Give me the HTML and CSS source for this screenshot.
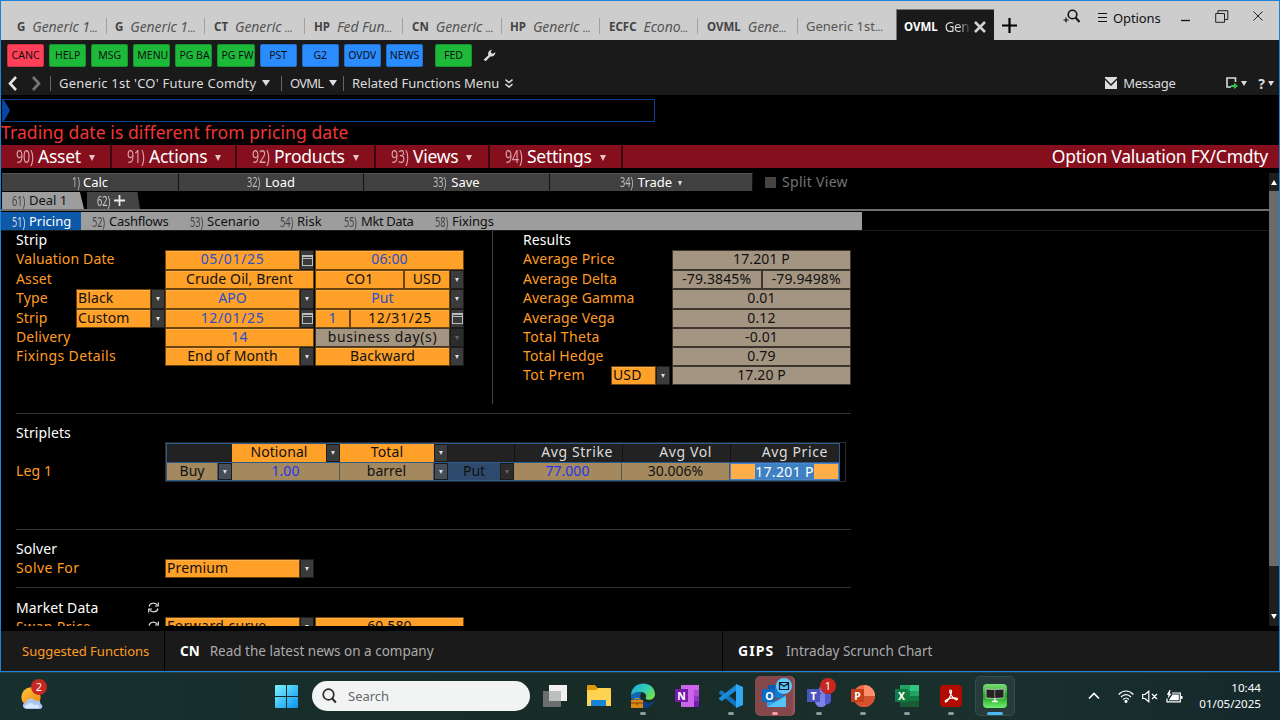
FILE: index.html
```
<!DOCTYPE html>
<html lang="en">
<head>
<meta charset="utf-8">
<title>OVML - Option Valuation</title>
<link rel="stylesheet" href="styles.css">
</head>
<body>
<main class="window">
  <header class="tabs">
    <div class="tab first"><b>G</b><i>Generic 1<small>...</small></i></div>
    <div class="tab"><b>G</b><i>Generic 1<small>...</small></i></div>
    <div class="tab nudge"><b>CT</b><i>Generic <small>...</small></i></div>
    <div class="tab nudge"><b>HP</b><i>Fed Fun<small>...</small></i></div>
    <div class="tab nudge"><b>CN</b><i>Generic <small>...</small></i></div>
    <div class="tab"><b>HP</b><i>Generic <small>...</small></i></div>
    <div class="tab nudge"><b>ECFC</b><i>Econo<small>...</small></i></div>
    <div class="tab nudge"><b>OVML</b><i>Gene<small>...</small></i></div>
    <div class="tab last"><span>Generic 1st<small>...</small></span></div>
    <div class="tab active"><b>OVML</b><span class="fade">Gene</span>
      <svg width="12" height="12" viewBox="0 0 12 12"><path d="M1 1L11 11M11 1L1 11" stroke="#d4d4d4" stroke-width="2.5"/></svg></div>
    <svg class="plus" width="15" height="15" viewBox="0 0 15 15"><path d="M7.5 0V15M0 7.500H15" stroke="#000" stroke-width="2.200"/></svg>
    <div class="win-tools">
      <svg class="find" width="18" height="15" viewBox="0 0 18 15" fill="none" stroke="#111"><circle cx="9.500" cy="5.500" r="4.300" stroke-width="1.600"/><path d="M12.500 8.500L16.500 13" stroke-width="2"/><path d="M3 8.500V13.500M.5 11H5.500" stroke-width="1.200"/></svg>
      <svg class="burger" width="9" height="9" viewBox="0 0 9 9"><path d="M0 .5H9M0 4.500H9M0 8.500H9" stroke="#111"/></svg>
      <span class="options">Options</span>
      <svg class="min" width="9" height="3" viewBox="0 0 9 3"><path d="M0 1.500H9" stroke="#111" stroke-width="1.300"/></svg>
      <svg class="max" width="14" height="13" viewBox="0 0 14 13" fill="none" stroke="#222"><path d="M.7 3.500H9.500V12.300H.7ZM3 3.500V.7H12.800V9.500H9.500"/></svg>
      <svg class="close" width="10" height="10" viewBox="0 0 10 10"><path d="M.5 .5L9.500 9.500M9.500 .5L.5 9.500" stroke="#222"/></svg>
    </div>
  </header>

  <div class="keys">
    <span class="key red">CANC</span><span class="key green">HELP</span><span class="key green">MSG</span><span class="key green">MENU</span><span class="key green">PG BA</span><span class="key green">PG FW</span><span class="key blue">PST</span><span class="key blue">G2</span><span class="key blue">OVDV</span><span class="key blue">NEWS</span><span class="key green fed">FED</span>
    <svg width="13" height="13" viewBox="0 0 13 13"><path d="M.6 10.800L5.300 6.200C4.600 3.300 6.300 .9 9.200 .8L7.600 2.700L8.600 4.600L10.600 4.500L12.400 3.100C12.500 5.900 10.200 8 7.300 7.500L2.700 12.300Z" fill="#dcdcdc"/></svg>
  </div>

  <nav class="crumbs">
    <svg class="back" width="9" height="15" viewBox="0 0 9 15"><path d="M8 1L2 7.500L8 14" fill="none" stroke="#e4e4e4" stroke-width="2.600"/></svg>
    <svg class="fwd" width="9" height="15" viewBox="0 0 9 15"><path d="M1 1L7 7.500L1 14" fill="none" stroke="#777" stroke-width="2.600"/></svg>
    <div class="crumb c1"><span>Generic 1st 'CO' Future Comdty</span><i class="tri"></i></div>
    <div class="crumb c2"><span>OVML</span><i class="tri"></i></div>
    <div class="crumb c3"><span>Related Functions Menu</span>
      <svg width="8" height="9" viewBox="0 0 8 9"><path d="M.5 .7L4 3.500L7.500 .7M.5 5.200L4 8L7.500 5.200" fill="none" stroke="#ddd" stroke-width="1.500"/></svg></div>
    <div class="crumb-right">
      <svg width="12" height="12" viewBox="0 0 12 12"><path d="M0 0H12V12H0Z" fill="#ddd"/><path d="M0 2L6 8L12 2" fill="none" stroke="#1a1a1a" stroke-width="1.400"/></svg>
      <span class="message">Message</span>
      <svg class="export" width="12" height="12" viewBox="0 0 12 12"><path d="M5 10H1V1H9.500V5" fill="none" stroke="#ddd" stroke-width="1.600"/><path d="M5 8H8V5.800L12 9L8 12V10H5Z" fill="#27c840"/></svg>
      <i class="tri small"></i><b class="help">?</b><i class="tri small"></i>
    </div>
  </nav>

  <div class="command"><svg width="8" height="21" viewBox="0 0 8 22" preserveAspectRatio="none"><path d="M0 0H1L7 11L1 22H0Z" fill="#0747a1"/></svg></div>
  <div class="alert">Trading date is different from pricing date</div>

  <div class="menu">
    <div class="m1"><em>90)</em><span>Asset</span><i class="tri"></i></div>
    <div class="m2"><em>91)</em><span>Actions</span><i class="tri"></i></div>
    <div class="m3"><em>92)</em><span>Products</span><i class="tri"></i></div>
    <div class="m4"><em>93)</em><span>Views</span><i class="tri"></i></div>
    <div class="m5"><em>94)</em><span>Settings</span><i class="tri"></i></div>
    <strong>Option Valuation FX/Cmdty</strong>
  </div>

  <div class="work">
    <div class="page">
      <div class="actions">
        <div><em>1)</em><span>Calc</span></div>
        <div><em>32)</em><span>Load</span></div>
        <div><em>33)</em><span>Save</span></div>
        <div><em>34)</em><span>Trade</span><i class="tri"></i></div>
        <label><i class="check"></i>Split View</label>
      </div>
      <div class="deals">
        <div class="deal"><em>61)</em><span>Deal 1</span></div>
        <div class="deal add"><em>62)</em><svg width="11" height="11" viewBox="0 0 11 11"><path d="M5.500 0V11M0 5.500H11" stroke="#e8e8e8" stroke-width="1.800"/></svg></div>
      </div>
      <div class="subtabs">
        <div class="on"><em>51)</em><span>Pricing</span></div>
        <div class="s2"><em>52)</em><span>Cashflows</span></div>
        <div class="s3"><em>53)</em><span>Scenario</span></div>
        <div class="s4"><em>54)</em><span>Risk</span></div>
        <div class="s5"><em>55)</em><span>Mkt Data</span></div>
        <div class="s6"><em>58)</em><span>Fixings</span></div>
      </div>

      <div class="body">
        <section class="upper">
          <div class="form">
            <h2>Strip</h2>
            <div class="row r20"><span class="lbl">Valuation Date</span><div class="fa"><span class="in ed wide">05/01/25</span><i class="cal"></i></div><div class="fb"><span class="in ed">06:00</span></div></div>
            <div class="row"><span class="lbl">Asset</span><div class="fa"><span class="in">Crude Oil, Brent</span></div><div class="fb"><span class="in">CO1</span><span class="in cur">USD</span><i class="dd"></i></div></div>
            <div class="row r20"><span class="lbl half">Type</span><div class="fs"><span class="in left">Black</span><i class="dd"></i></div><div class="fa"><span class="in ed">APO</span><i class="dd"></i></div><div class="fb"><span class="in ed">Put</span><i class="dd"></i></div></div>
            <div class="row"><span class="lbl half">Strip</span><div class="fs"><span class="in left">Custom</span><i class="dd"></i></div><div class="fa"><span class="in ed wide">12/01/25</span><i class="cal"></i></div><div class="fb"><span class="in ed n1">1</span><span class="in wide">12/31/25</span><i class="cal"></i></div></div>
            <div class="row"><span class="lbl">Delivery</span><div class="fa"><span class="in ed">14</span></div><div class="fb"><span class="in ro wide">business day(s)</span><i class="dd off"></i></div></div>
            <div class="row"><span class="lbl loose">Fixings Details</span><div class="fa"><span class="in">End of Month</span><i class="dd"></i></div><div class="fb"><span class="in">Backward</span><i class="dd"></i></div></div>
          </div>
          <div class="results">
            <h2>Results</h2>
            <div class="row r20"><span class="lbl">Average Price</span><div class="fr"><span class="in ro">17.201 P</span></div></div>
            <div class="row"><span class="lbl">Average Delta</span><div class="fr"><span class="in ro">-79.3845%</span><span class="in ro">-79.9498%</span></div></div>
            <div class="row r20"><span class="lbl">Average Gamma</span><div class="fr"><span class="in ro">0.01</span></div></div>
            <div class="row"><span class="lbl">Average Vega</span><div class="fr"><span class="in ro">0.12</span></div></div>
            <div class="row"><span class="lbl loose">Total Theta</span><div class="fr"><span class="in ro">-0.01</span></div></div>
            <div class="row"><span class="lbl">Total Hedge</span><div class="fr"><span class="in ro">0.79</span></div></div>
            <div class="row"><span class="lbl prem loose">Tot Prem</span><div class="fc"><span class="in left">USD</span><i class="dd"></i></div><div class="fr"><span class="in ro">17.20 P</span></div></div>
          </div>
        </section>

        <section class="striplets">
          <h2>Striplets</h2>
          <div class="leg"><span class="lbl">Leg 1</span>
            <div class="grid">
              <div class="cells head">
                <span></span><span class="o">Notional</span><i class="dd"></i><span class="o">Total</span><i class="dd"></i><span></span><span class="r">Avg Strike</span><span class="r vol-h">Avg Vol</span><span class="r price-h">Avg Price</span>
              </div>
              <div class="cells data">
                <span class="t">Buy</span><i class="dd sl"></i><span class="t ed2">1.00</span><span class="t">barrel</span><i class="dd sl"></i><span class="put">Put</span><i class="dd off"></i><span class="t ed2">77.000</span><span class="t">30.006%</span><span class="focus"><mark>17.201 P</mark></span>
              </div>
            </div>
          </div>
        </section>

        <section class="solver">
          <h2>Solver</h2>
          <div class="row"><span class="lbl loose">Solve For</span><div class="fa"><span class="in left">Premium</span><i class="dd"></i></div></div>
        </section>

        <section class="market">
          <h2><span>Market Data</span><svg width="11" height="11" viewBox="0 0 11 11" fill="none" stroke="#ddd" stroke-width="1.200"><path d="M1 4.500C2 .4 7.500 .2 9.500 3.500M10 6.500C9 10.600 3.500 10.800 1.500 7.500"/><path d="M10.300 .5V4H7M.7 10.500V7H4"/></svg></h2>
          <div class="row"><span class="lbl sw loose"><span>Swap Price</span><svg width="11" height="11" viewBox="0 0 11 11" fill="none" stroke="#ddd" stroke-width="1.200"><path d="M1 4.500C2 .4 7.500 .2 9.500 3.500M10 6.500C9 10.600 3.500 10.800 1.500 7.500"/><path d="M10.300 .5V4H7M.7 10.500V7H4"/></svg></span><div class="fa"><span class="in left fwdc">Forward curve</span><i class="dd"></i></div><div class="fb"><span class="in">60.580</span></div></div>
        </section>
      </div>
    </div>
    <aside class="scroll"><i class="up"></i><div class="thumb"></div><i class="down"></i></aside>
  </div>

  <footer class="suggest">
    <span class="sf">Suggested Functions</span>
    <div class="s-a"><b>CN</b><span>Read the latest news on a company</span></div>
    <div class="s-b"><b>GIPS</b><span>Intraday Scrunch Chart</span></div>
  </footer>
</main>

<div class="taskbar">
  <div class="weather">
    <svg width="26" height="32" viewBox="0 0 26 32"><defs><linearGradient id="sun" x2="1" y2="1"><stop stop-color="#ffc83a"/><stop offset="1" stop-color="#ef7f16"/></linearGradient></defs><circle cx="10" cy="17" r="9.700" fill="url(#sun)"/><path d="M6 29C1 29 .5 23 5 22.500C6 18 12 17 14 21C17 19.500 20 21.500 19.500 24C22.500 25 21.500 29 19 29Z" fill="#a9c6f2"/><path d="M5 28C2 27 4 24.500 6.500 25C8 22 12 22.500 13 25.500C16 23 19 26 18 28Z" fill="#dbe7fb"/></svg>
    <b class="badge">2</b>
  </div>
  <svg class="start" width="23" height="23" viewBox="0 0 23 23"><defs><linearGradient id="w" x2="1" y2="1"><stop stop-color="#7cf3ff"/><stop offset="1" stop-color="#0a92f5"/></linearGradient></defs><path d="M0 1Q0 0 1 0H11V11H0ZM12 0H22Q23 0 23 1V11H12ZM0 12H11V23H1Q0 23 0 22ZM12 12H23V22Q23 23 22 23H12Z" fill="url(#w)"/></svg>
  <div class="search"><svg width="15" height="16" viewBox="0 0 15 16" fill="none" stroke="#2a2a2a" stroke-width="1.700"><circle cx="6.500" cy="6.500" r="5.300"/><path d="M10.300 10.500L13.800 14.500" stroke-width="2"/></svg><span>Search</span></div>
  <div class="apps">
    <div class="app"><svg width="26" height="26" viewBox="0 0 26 26"><path d="M7 2H25V18H7Z" fill="#f1f1f1"/><path d="M1 8H19V24H1Z" fill="#6b6f6f"/><path d="M7 8H19V18H7Z" fill="#bdbfbf"/></svg></div>
    <div class="app"><svg width="26" height="26" viewBox="0 0 26 26"><path d="M1 3Q1 2 2 2H9L11.500 5H24V10H1Z" fill="#dd9a05"/><path d="M1 7H10L12 5H24Q25 5 25 6V23H1Z" fill="#ffd252"/><path d="M5 18Q5 17 6 17H19Q20 17 20 18V23H5Z" fill="#1683d8"/></svg></div>
    <div class="app dot"><svg width="26" height="26" viewBox="0 0 26 26"><defs><linearGradient id="eg" x2="1" y2=".7"><stop stop-color="#1aa5e8"/><stop offset=".6" stop-color="#35d0ad"/><stop offset="1" stop-color="#76e046"/></linearGradient></defs><path d="M1 13C1 8 8 6 12 9C9 12 10 17 14 19C18 21 22 20 24 18C22 23 17 25 13 25C6 25 1 20 1 13Z" fill="#1266b4"/><path d="M1 12C2-3 24-3 25 11C25 17 18 18 15.500 15.500C19 9 8 6 1 12Z" fill="url(#eg)"/><path d="M12 18C17 21 21 20 24 18C22 23 17 25 13 25Z" fill="#0b3d85"/><path d="M1 17H13V25H1Z" fill="#d98814"/><path d="M5 17V15.500H9V17" fill="none" stroke="#d98814"/><path d="M1 20H13M6 21H8" stroke="#7c430b"/></svg></div>
    <div class="app"><svg width="26" height="26" viewBox="0 0 26 26"><path d="M7 2H25V24H7Z" fill="#ca64ea"/><path d="M20 7H25V13H20Z" fill="#ae4bd5"/><path d="M20 13H25V18H20Z" fill="#9332bf"/><path d="M20 18H25V24H20Z" fill="#7719aa"/><path d="M1 6H14V19H1Z" fill="#7719aa"/></svg><b class="glyph">N</b></div>
    <div class="app dot"><svg width="26" height="26" viewBox="0 0 26 26"><path d="M1 9L3.500 7.300L19 19V25L1 10.300Z" fill="#1174c0"/><path d="M1 16L3.500 18.300L19 7V1L1 15Z" fill="#1b8bd8"/><path d="M18 1L25 4V22L18 25Z" fill="#31a8f4"/></svg></div>
    <div class="app dot hot"><svg width="26" height="26" viewBox="0 0 26 26"><path d="M7 2H22V15H7Z" fill="#1478cf"/><path d="M7 2H14V8H7Z" fill="#0b5aac"/><path d="M6 13L15 18L25 12V24H6Z" fill="#28a1e8"/><path d="M6 24L25 13V24Z" fill="#52c5f5"/><path d="M1 6H14V19H1Z" fill="#0d6cc0"/></svg><b class="glyph">O</b><svg class="mail" width="16" height="16" viewBox="0 0 16 16"><circle cx="8" cy="8" r="8" fill="#5cc8ff"/><path d="M3.500 4.500H12.500V11.500H3.500ZM3.500 5L8 8.500L12.500 5" fill="none" stroke="#101820" stroke-width="1.200"/></svg></div>
    <div class="app dot"><svg width="26" height="26" viewBox="0 0 26 26"><circle cx="17" cy="7" r="4" fill="#7b83eb"/><path d="M9 11H21V18C21 26 9 26 9 18Z" fill="#7b83eb"/><path d="M19 11H25V17C25 21 22 22 19 21Z" fill="#5059c9"/><path d="M1 6H14V19H1Z" fill="#4b53bc"/></svg><b class="glyph">T</b><b class="badge">1</b></div>
    <div class="app dot"><svg width="26" height="26" viewBox="0 0 26 26"><circle cx="14" cy="13" r="11" fill="#ed6c47"/><path d="M14 2A11 11 0 0 1 25 13H14Z" fill="#ff8f6b"/><path d="M3 13H25A11 11 0 0 1 3 13Z" fill="#d35230"/><path d="M1 6H14V19H1Z" fill="#c43e1c"/></svg><b class="glyph">P</b></div>
    <div class="app dot"><svg width="26" height="26" viewBox="0 0 26 26"><path d="M6 2H16V13H6Z" fill="#21a366"/><path d="M16 2H25V13H16Z" fill="#33c481"/><path d="M6 8H16V24H6Z" fill="#107c41"/><path d="M16 8H25V13H16Z" fill="#21a366"/><path d="M6 18H25V24H6Z" fill="#185c37"/><path d="M16 13H25V18H16Z" fill="#107c41"/><path d="M1 6H14V19H1Z" fill="#107c41"/></svg><b class="glyph">X</b></div>
    <div class="app dot"><svg width="26" height="26" viewBox="0 0 26 26"><rect x="2" y="2" width="22" height="22" rx="4" fill="#b30b00"/><path d="M12.500 7C11 7 11.800 10 13.500 12.500C15 15 18 17.500 19.200 16.600C20.500 15.300 17 14.600 13 15.200C9 16 6.500 17.800 7.300 18.700C8.500 19.700 11 16 12.500 12.500C13.700 9.500 14 7 12.500 7Z" fill="none" stroke="#fff" stroke-width="1.200"/></svg></div>
    <div class="app cur-app"><svg width="26" height="26" viewBox="0 0 26 26"><defs><linearGradient id="bb" y2="1" x2="0"><stop stop-color="#7adf78"/><stop offset=".5" stop-color="#1fa01c"/><stop offset="1" stop-color="#6ff070"/></linearGradient></defs><rect x="1" y="1" width="24" height="24" rx="4" fill="url(#bb)"/><path d="M4 6L12.500 6.500L22 6V15L12.500 15.500L4 15Z" fill="#222" stroke="#cfd8cf" stroke-width=".8"/><path d="M12.800 6.500V15" stroke="#888"/><path d="M13 15.500V18M10 18.500H16" stroke="#f4f4f4" stroke-width="1.600" fill="none"/></svg></div>
  </div>
  <div class="tray">
    <svg width="12" height="8" viewBox="0 0 12 8"><path d="M1 6.500L6 1.500L11 6.500" fill="none" stroke="#fff" stroke-width="1.600"/></svg>
    <svg class="wifi" width="16" height="13" viewBox="0 0 16 13" fill="none" stroke="#fff" stroke-width="1.200"><path d="M.7 4.500C5-.2 11-.2 15.300 4.500M3 7C6 3.800 10 3.800 13 7M5.200 9.500C7 7.500 9 7.500 10.800 9.500"/><circle cx="8" cy="11.300" r="1" fill="#fff"/></svg>
    <svg class="vol" width="16" height="13" viewBox="0 0 16 13" fill="none" stroke="#fff" stroke-width="1.200"><path d="M.7 4.500H3L6.800 1.200V11.800L3 8.500H.7ZM10 4L15 9M15 4L10 9"/></svg>
    <svg class="bat" width="17" height="13" viewBox="0 0 17 13"><path d="M6 3H14.300V11.900H1V8.500" fill="none" stroke="#fff" stroke-width="1.200"/><path d="M6.500 4.600H12.800V10.300H2.800ZM15 6H16.500V9H15Z" fill="#fff"/><path d="M3.500 0L.8 4.800H2.500L1.800 8.500L5.500 3.800H3.800L4.500 0Z" fill="#fff"/></svg>
    <div class="clock"><span>10:44</span><span>01/05/2025</span></div>
  </div>
</div>
</body>
</html>
```

FILE: styles.css
```
* { box-sizing: border-box; }
body { margin: 0; width: 1280px; height: 720px; overflow: hidden; background: #000; font-family: "Noto Sans", "Open Sans", sans-serif; font-size: 14px; color: #ddd; }
svg { flex: none; display: block; }
i, em { font-style: normal; flex: none; }
h2 { margin: 0; font-size: 14px; font-weight: 400; color: #fff; }
span { white-space: nowrap; }
.window { height: 672px; border: 1px solid #1e82d8; display: flex; flex-direction: column; background: #000; }

/* window tabs */
.tabs { height: 39px; background: #cdcdcd; display: grid; grid-template-columns: 106px 98px 100px 98px 99px 98px 98px 100px 98px 98px 15px 1fr; font-size: 13px; color: #555; }
.tab { display: flex; align-items: center; height: 16px; margin-top: 17px; padding-left: 8px; border-right: 1px solid #a0a0a0; white-space: nowrap; }
.tab.nudge { padding-left: 9px; }
.tab b { font-size: 11.5px; color: #444; margin-right: 7px; }
.tab i { font-style: italic; letter-spacing: -.1px; font-size: 14px; }
.tab small { font-size: 11px; letter-spacing: -.3px; }
.tab.first { padding-left: 16px; }
.tab.last { border-right: 0; }
.tab.active { height: 31px; margin-top: 8px; background: #1a1a1a; border: 1px solid #777; border-bottom: 0; border-right: 0; padding: 3px 8px 0 7px; }
.tab.active b { color: #fff; }
.fade { width: 28px; overflow: hidden; margin-right: 4px; font-size: 13.500px; letter-spacing: -.5px; background: linear-gradient(90deg, #ddd 55%, #333); background-clip: text; -webkit-background-clip: text; color: transparent; }
.plus { margin: 17px 0 0 8px; }
.win-tools { display: flex; align-items: flex-start; padding-left: 54px; color: #111; }
.find { margin-top: 8px; }
.burger { margin: 12px 0 0 17px; }
.options { margin: 8px 0 0 6px; width: 46px; font-size: 13px; letter-spacing: -.1px; }
.min { margin: 18px 0 0 22px; }
.max { margin: 9px 0 0 25px; }
.close { margin: 10px 0 0 24px; }

/* function keys */
.keys { height: 31px; background: #1a1a1a; display: flex; gap: 5px; padding: 4px 0 0 6px; align-items: flex-start; }
.key { width: 37.100px; height: 23px; border-radius: 2px; font-size: 10.500px; color: #101010; text-align: center; overflow: hidden; padding: 0 3px; border: 1px solid rgba(0,0,0,.2); line-height: 21px; }
.red { background: #ff4058; }
.green { background: #1dba3a; }
.blue { background: #2a8cff; }
.fed { margin-left: 7px; }
.keys svg { margin: 5px 0 0 6px; }

/* breadcrumb */
.crumbs { height: 24px; background: #1a1a1a; display: flex; align-items: center; padding-left: 7px; font-size: 13px; }
.fwd { margin-left: 15px; margin-right: 9px; }
.crumb { display: flex; align-items: center; height: 15px; border-left: 1px solid #666; padding-left: 8px; }
.c1 { width: 231px; letter-spacing: .23px; } .c2 { width: 62px; letter-spacing: -.8px; } .c3 { width: 178px; }
.tri { width: 0; height: 0; border: 4px solid transparent; border-top: 6px solid #ddd; border-bottom: 0; margin-left: 6px; }
.c3 svg { margin-left: 6px; }
.crumb-right { display: flex; align-items: center; margin-left: auto; padding-right: 5px; }
.message { margin: 0 50px 0 6px; width: 53px; letter-spacing: -.3px; }
.tri.small { border-width: 5px 3px 0; margin-left: 3px; }
.help { margin-left: 11px; font-size: 14px; }

.command { width: 653px; height: 23px; border: 1px solid #0d4192; margin: 4px 0 0 1px; flex: none; }
.alert { height: 23px; line-height: 20px; font-size: 17.500px; letter-spacing: .08px; color: #f23535; white-space: nowrap; }

/* red menu */
.menu { height: 23px; background: #850f1d; display: flex; margin-bottom: 5px; color: #fff; font-size: 17.500px; letter-spacing: -.25px; }
.menu div { display: flex; align-items: center; border-right: 2px solid #3a070e; padding-left: 15px; line-height: 22px; padding-bottom: 1px; }
em { display: inline-block; transform: scaleX(.66); transform-origin: 0 50%; color: #d9a5aa; white-space: nowrap; font-size: 1.08em; }
.menu em { width: 22px; }
.m1 { width: 111px; } .m2 { width: 125px; } .m3 { width: 139px; } .m4 { width: 114px; } .m5 { width: 133px; }
.menu .tri { border-width: 6px 3.500px 0; margin-left: 8px; border-top-color: #e5c5c8; margin-top: 3px; }
.menu strong { margin-left: auto; padding-right: 11px; font-weight: 400; line-height: 22px; white-space: nowrap; }

.work { flex: none; height: 453px; display: flex; margin-bottom: 5px; }
.page { width: 1268px; overflow: hidden; display: flex; flex-direction: column; }
.actions { display: flex; height: 18px; flex: none; color: #fff; font-size: 13px; padding-left: 1px; line-height: 16px; }
.actions div { display: flex; align-items: center; justify-content: center; background: #404040; border-top: 1px solid #555; border-right: 1px solid #111; width: 186px; padding-bottom: 1px; }
.actions div:first-child { width: 177px; } .actions div:nth-child(2) { width: 185px; } .actions div:nth-child(4) { width: 203px; }
.actions em { width: 18px; color: #bbb; }
.actions div:first-child em { width: 11px; }
.actions .tri { border-width: 5px 2.500px 0; margin-top: 2px; }
.actions label { display: flex; align-items: center; color: #747474; font-size: 14px; letter-spacing: .3px; }
.check { width: 11px; height: 11px; background: #444; margin: 0 6px 0 12px; }

.deals { display: flex; height: 20px; flex: none; padding: 1px 0 0 1px; gap: 3px; border-bottom: 2px solid #6e6e6e; font-size: 13px; line-height: 17px; }
.deal { display: flex; align-items: center; height: 17px; width: 82px; background: #9d9d9d; color: #111; padding-left: 10px; clip-path: polygon(0 0, 95% 0, 100% 100%, 0 100%); }
.deal em { width: 17px; color: #444; }
.add { width: 53px; background: #444; }
.deal.add em { color: #ccc; }

.subtabs { flex: none; display: flex; width: 861px; height: 18px; background: #9d9d9d; color: #111; font-size: 13px; margin-top: 1px; line-height: 17px; }
.subtabs div { display: flex; align-items: center; padding-left: 11px; }
.subtabs em { width: 17px; color: #444; }
.subtabs .on { width: 80px; background: #0d59a8; color: #fff; }
.subtabs .on em { color: #cfdcec; }
.s2 { width: 98px; letter-spacing: -.25px; } .s3 { width: 90px; } .s4 { width: 64px; } .s5 { width: 91px; letter-spacing: -.4px; } .s6 { letter-spacing: -.1px; }

/* form */
.body { border-top: 1px solid #1c1c1c; padding-left: 15px; width: 1268px; }
.body section { width: 835px; border-bottom: 1px solid #333; }
.upper { display: flex; height: 183px; }
.form { flex: none; width: 477px; height: 173px; border-right: 1px solid #444; }
.results { flex: none; padding-left: 30px; }
h2 { height: 19px; line-height: 17px; letter-spacing: .1px; }
.row { display: flex; height: 19px; }
.r20 { height: 20px; }
.lbl { flex: none; width: 149px; line-height: 18px; color: #ff9c22; letter-spacing: .15px; }
.loose { letter-spacing: .38px; }
.half { width: 60px; }
.fs { flex: none; width: 89px; display: flex; }
.fa { flex: none; width: 149px; display: flex; margin-right: 1px; }
.fb { flex: none; width: 149px; display: flex; }
.fr { flex: none; width: 179px; display: flex; }
.in { flex: 1; height: 100%; background: #ffa028; color: #111; border: 1px solid #6b430d; text-align: center; line-height: 16px; letter-spacing: .12px; box-shadow: inset 0 1px #ffb04c; }
.in.left { text-align: left; padding-left: 1px; }
.wide { letter-spacing: .65px; }
.fwdc { letter-spacing: .4px; }
.ed { color: #2a50c8; }
.ro { background: #a49582; border-color: #3c362e; box-shadow: none; }
.cur { flex: none; width: 46px; } .n1 { flex: none; width: 35px; }
.dd, .cal { width: 14px; height: 100%; background: #3b3b3b; border: 1px solid #1c1c1c; display: flex; align-items: center; justify-content: center; }
.dd::after { content: ""; border: 2.500px solid transparent; border-top: 4px solid #dcdcdc; border-bottom: 0; }
.dd.off { background: #2c2c2c; } .dd.off::after { border-top-color: #666; }
.cal::after { content: ""; width: 9px; height: 8px; border: 1px solid #bbb; border-top-width: 2px; background: linear-gradient(#3b3b3b 1px, #bbb 1px, #bbb 2px, #3b3b3b 2px); }
.results .lbl { width: 149px; }
.results .prem { width: 88px; }
.fc { width: 61px; display: flex; padding-right: 2px; }

.striplets { height: 116px; padding-top: 10px; }
.striplets h2 { height: 18px; }
.leg { display: flex; }
.leg .lbl { padding-top: 20px; }
.grid { width: 681px; height: 40px; border: 1px solid #2c2c2c; }
.cells { display: grid; width: 674px; height: 19px; border: 1px solid #2a5a90; border-bottom: 0; line-height: 16px; text-align: center; }
.head { grid-template-columns: 65px 94px 14px 94px 14px 66px 108px 108px 1fr; background: #222; }
.head .o { background: #ffa028; color: #111; letter-spacing: .1px; }
.head .r { border-left: 1px solid #111; text-align: right; padding-right: 9px; color: #ddd; letter-spacing: .6px; }
.head .vol-h { padding-right: 18px; }
.head .price-h { padding-right: 11px; }
.cells.data { grid-template-columns: 51px 14px 108px 94px 14px 52px 14px 108px 108px 1fr; border-bottom: 1px solid #2a5a90; background: #344a63; }
.data .t { background: #a4895f; color: #111; border-right: 1px solid #4c5a66; }
.data .ed2 { color: #2436e8; }
.sl { background: #454f5b; }
.put { background: #2d4a6c; color: #111; }
.focus { border: 1px solid #4a86c8; background: #ffae48; display: flex; justify-content: center; }
mark { background: #3d80c4; color: #fff; white-space: nowrap; line-height: 15px; letter-spacing: .35px; }

.solver { height: 58px; padding-top: 10px; }
.market { padding-top: 10px; }
.market h2, .sw { display: flex; align-items: center; }
.market h2 span, .sw span { width: 132px; }

.scroll { width: 10px; background: #1e1e1e; display: flex; flex-direction: column; align-items: center; }
.up, .down { width: 0; height: 0; border: 3px solid transparent; }
.up { border-bottom: 5px solid #fff; border-top: 0; margin: 7px 0 6px; }
.thumb { width: 10px; height: 375px; background: #6b6b6b; }
.down { border-top: 5px solid #fff; border-bottom: 0; margin-top: auto; margin-bottom: 7px; }

.suggest { flex: none; height: 40px; background: #1a1a1a; display: flex; line-height: 40px; font-size: 13.500px; color: #aaa; }
.sf { width: 164px; padding-left: 21px; color: #ff9c22; border-right: 1px solid #000; font-size: 13px; }
.suggest div { display: flex; padding-left: 15px; }
.suggest b { color: #fff; margin-right: 10px; }
.s-a { width: 558px; border-right: 1px solid #000; }
.s-b b { width: 38px; font-size: 14px; letter-spacing: 1.100px; }

/* taskbar */
.taskbar { height: 48px; background: linear-gradient(90deg, #17302f, #172c27 45%, #1a302d 75%, #15292c); display: flex; align-items: center; border-top: 1px solid #2f403f; padding-bottom: 1px; }
.weather { position: relative; margin-left: 21px; width: 254px; }
.badge { position: absolute; width: 16px; height: 16px; border-radius: 50%; background: #c62820; color: #fff; font-size: 11px; line-height: 16px; text-align: center; font-weight: 400; }
.weather .badge { left: 10px; top: -1px; }
.start { margin-right: 14px; }
.search { width: 218px; height: 30px; border-radius: 15px; background: #f2f4f4; display: flex; align-items: center; padding-left: 10px; gap: 11px; font-size: 13px; color: #666; }
.apps { display: flex; gap: 4px; margin-left: 5px; }
.app { position: relative; width: 40px; height: 40px; display: flex; align-items: center; justify-content: center; border-radius: 5px; }
.dot::after, .cur-app::after { content: ""; position: absolute; left: 17px; bottom: 1px; width: 6px; height: 3px; border-radius: 2px; background: #909a99; }
.cur-app { background: #273b3b; border: 1px solid #31504c; }
.cur-app::after { left: 11px; width: 16px; background: #4cb8f5; bottom: 0; }
.hot { background: #83474c; border-right: 2px solid #9a595d; }
.hot::after { background: #ff9aa4; }
.glyph { position: absolute; left: 8px; top: 12px; width: 13px; line-height: 16px; text-align: center; font-size: 10.500px; color: #fff; }
.mail { position: absolute; left: 21px; top: 2px; }
.app .badge { left: 21px; top: 2px; }
.tray { display: flex; align-items: center; margin-left: auto; padding-right: 19px; }
.wifi { margin-left: 18px; } .vol { margin-left: 8px; } .bat { margin-left: 8px; }
.clock { display: flex; flex-direction: column; text-align: right; font-size: 11.600px; line-height: 16px; color: #fff; width: 78px; }
```
